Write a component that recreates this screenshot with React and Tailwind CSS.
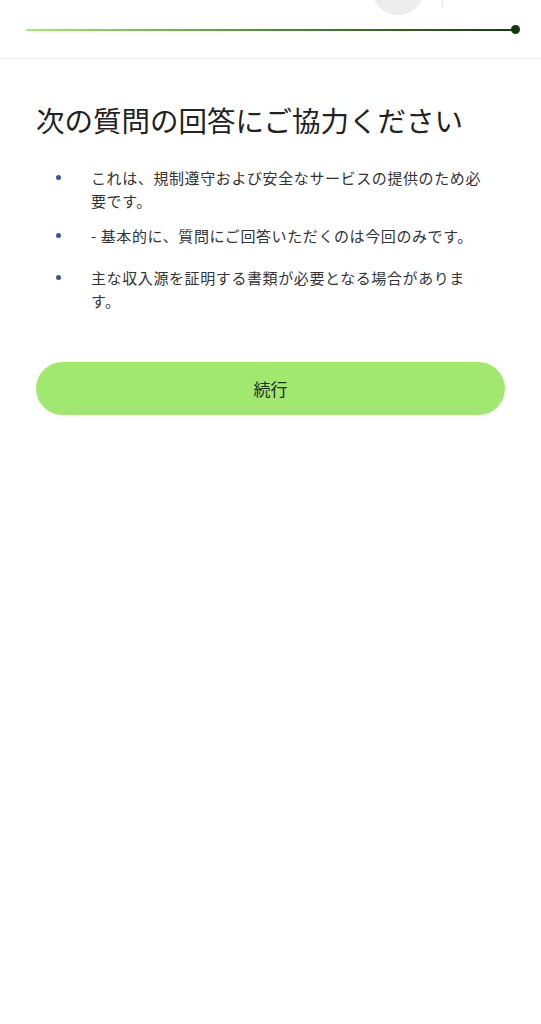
export default function App() {
  const items = [
    { text: 'これは、規制遵守および安全なサービスの提供のため必要です。', gap: '' },
    { text: '- 基本的に、質問にご回答いただくのは今回のみです。', gap: 'mt-3' },
    { text: '主な収入源を証明する書類が必要となる場合があります。', gap: 'mt-[19px]' },
  ]

  return (
    <div
      className="min-h-[1024px] w-full bg-white"
      style={{ fontFamily: '"Noto Sans CJK JP", "Noto Sans", sans-serif' }}
    >
      {/* Header with progress */}
      <header className="relative h-[59px] overflow-hidden border-b border-[#efefef]">
        <div className="absolute left-[372px] top-[-37px] h-[52px] w-[52px] rounded-full bg-[#ececec]" />
        <div className="absolute left-[442px] top-0 h-[7px] w-px bg-[#e6e6e6]" />
        <div className="flex h-full items-center pl-[26px] pr-[21px] pt-px">
          <div className="h-[2px] flex-1 bg-gradient-to-r from-[#a3ec74] via-[#4f8f36] to-[#1a3a12]" />
          <div className="-ml-1 h-[9px] w-[9px] rounded-full bg-[#15380f]" />
        </div>
      </header>

      <main className="px-9 pt-[41px]">
        <h1 className="text-[28.5px] leading-[40px] font-normal text-[#222]">
          次の質問の回答にご協力ください
        </h1>

        <ul className="mt-[26px] pr-[15px]">
          {items.map((it, i) => (
            <li key={i} className={`flex items-start ${it.gap}`}>
              <span className="ml-5 mt-[9px] h-[5px] w-[5px] shrink-0 rounded-full bg-[#3a5794]" />
              <p className="ml-[30px] text-[15px] leading-[23px] tracking-[0.6px] text-[#333]">
                {it.text}
              </p>
            </li>
          ))}
        </ul>

        <button className="mt-[50px] flex h-[53px] w-full items-center justify-center rounded-full bg-[#a1e871] text-[17px] text-[#1f2a1b]">
          続行
        </button>
      </main>
    </div>
  )
}
